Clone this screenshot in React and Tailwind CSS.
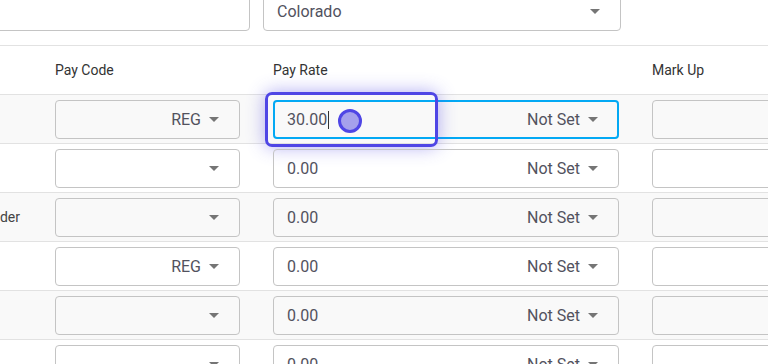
import React from "react";

const rows = [
  { label: "", code: "REG", rate: "30.00", focused: true },
  { label: "", code: "", rate: "0.00" },
  { label: "Provider", code: "", rate: "0.00" },
  { label: "", code: "REG", rate: "0.00" },
  { label: "", code: "", rate: "0.00" },
  { label: "", code: "", rate: "0.00" },
];

const Caret = () => (
  <svg width="10" height="5" viewBox="0 0 10 5" className="shrink-0">
    <path d="M0 0h10L5 5z" fill="#757575" />
  </svg>
);

const SelectBox = ({ value }) => (
  <div className="h-[39px] w-full rounded-[4px] border border-[#c4c4c4] flex items-center justify-end pl-[13px] pr-[20px] gap-[8px] text-[16px] text-[#52525e]">
    <span>{value}</span>
    <Caret />
  </div>
);

const RateBox = ({ value, focused }) => (
  <div className="relative">
    <div
      className={
        focused
          ? "h-[39px] w-full rounded-[4px] border-2 border-[#03a9f4] flex items-center pl-[12px] pr-[19px] text-[16px] text-[#52525e]"
          : "h-[39px] w-full rounded-[4px] border border-[#c4c4c4] flex items-center pl-[13px] pr-[20px] text-[16px] text-[#52525e]"
      }
    >
      <span>{value}</span>
      {focused && <span className="w-px h-[18px] bg-[#333] ml-[1px]" />}
      <span className="ml-auto">Not Set</span>
      <span className="ml-[8px]">
        <Caret />
      </span>
    </div>
    {focused && (
      <>
        <div className="absolute left-[-8px] top-[-8px] w-[173px] h-[55px] rounded-[7px] border-[3px] border-[#4f46e5] shadow-[0_0_18px_rgba(79,70,229,0.45)] pointer-events-none" />
        <div className="absolute left-[65px] top-[9px] w-[24px] h-[24px] rounded-full bg-[#a5a1ec] border-[3px] border-[#4f46e5]" />
      </>
    )}
  </div>
);

export default function App() {
  return (
    <div
      className="w-[768px] h-[364px] overflow-hidden bg-white"
      style={{ fontFamily: "Roboto, 'Noto Sans', sans-serif" }}
    >
      <div className="flex gap-[13px] -ml-[107px] -mt-[10px]">
        <div className="h-[41px] w-[357px] shrink-0 rounded-[4px] border border-[#c4c4c4]" />
        <div className="h-[41px] w-[358px] shrink-0 rounded-[4px] border border-[#c4c4c4] flex items-center pl-[13px] pr-[20px] pt-[2px] text-[16px] text-[#52525e]">
          <span>Colorado</span>
          <span className="ml-auto">
            <Caret />
          </span>
        </div>
      </div>

      <div className="mt-[14px] border-t border-[#e2e2e2] -ml-[161px]">
        <div className="flex h-[48px] items-center text-[14px] text-[#333]">
          <div className="w-[200px] shrink-0" />
          <div className="w-[217px] shrink-0 px-[16px]">Pay Code</div>
          <div className="w-[379px] shrink-0 pl-[17px] pr-[16px]">Pay Rate</div>
          <div className="w-[200px] shrink-0 pl-[17px] pr-[16px]">Mark Up</div>
        </div>
        {rows.map((row, i) => (
          <div
            key={i}
            className={
              i % 2 === 0
                ? "flex border-t border-[#e2e2e2] bg-[#f9f9f9] pt-[5px] pb-[4px]"
                : "flex border-t border-[#e2e2e2] bg-white pt-[5px] pb-[4px]"
            }
          >
            <div className="w-[200px] shrink-0 pr-[19px] flex items-center justify-end text-[14px] text-[#444]">
              {row.label}
            </div>
            <div className="w-[217px] shrink-0 px-[16px]">
              <SelectBox value={row.code} />
            </div>
            <div className="w-[379px] shrink-0 pl-[17px] pr-[16px]">
              <RateBox value={row.rate} focused={row.focused} />
            </div>
            <div className="w-[200px] shrink-0 pl-[17px] pr-[16px]">
              <div className="h-[39px] w-full rounded-[4px] border border-[#c4c4c4]" />
            </div>
          </div>
        ))}
      </div>
    </div>
  );
}
